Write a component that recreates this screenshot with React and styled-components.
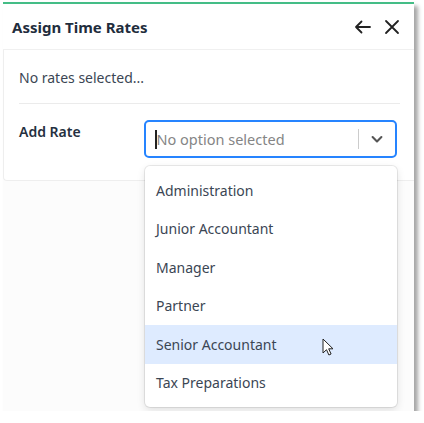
import React from "react";
import styled, { createGlobalStyle } from "styled-components";

const GlobalStyle = createGlobalStyle`
  body {
    margin: 0;
    background: #fff;
    font-family: "Noto Sans", "Open Sans", sans-serif;
  }
`;

const options = [
  "Administration",
  "Junior Accountant",
  "Manager",
  "Partner",
  "Senior Accountant",
  "Tax Preparations",
];

const App = () => {
  return (
    <>
      <GlobalStyle />
      <Frame>
        <Header>
          <Title>Assign Time Rates</Title>
          <HeaderIcons>
            <IconButton aria-label="back">
              <svg width="20" height="20" viewBox="0 0 20 20" fill="none" stroke="#222" strokeWidth="1.8" strokeLinecap="round" strokeLinejoin="round">
                <path d="M17 10H3M8.5 4.5 3 10l5.5 5.5" />
              </svg>
            </IconButton>
            <IconButton aria-label="close">
              <svg width="20" height="20" viewBox="0 0 20 20" fill="none" stroke="#222" strokeWidth="1.8" strokeLinecap="round">
                <path d="M4 4l12 12M16 4 4 16" />
              </svg>
            </IconButton>
          </HeaderIcons>
        </Header>
        <Card>
          <EmptyText>No rates selected...</EmptyText>
          <Divider />
          <FieldRow>
            <Label>Add Rate</Label>
            <SelectWrap>
              <Control>
                <Caret />
                <Placeholder>No option selected</Placeholder>
                <Separator />
                <Chevron>
                  <svg width="16" height="16" viewBox="0 0 20 20" fill="none" stroke="#555" strokeWidth="2.6" strokeLinecap="round" strokeLinejoin="round">
                    <path d="M4.5 7.5 10 13l5.5-5.5" />
                  </svg>
                </Chevron>
              </Control>
              <Menu>
                {options.map((opt) => (
                  <Option key={opt} focused={opt === "Senior Accountant"}>
                    {opt}
                    {opt === "Senior Accountant" && (
                      <Pointer width="12" height="18" viewBox="0 0 12 18">
                        <path d="M1 1v14l3.5-3.3 2.4 5.3 2.2-1-2.4-5.2H11z" fill="#fff" stroke="#222" strokeWidth="1" strokeLinejoin="round" />
                      </Pointer>
                    )}
                  </Option>
                ))}
              </Menu>
            </SelectWrap>
          </FieldRow>
        </Card>
      </Frame>
    </>
  );
};

export default App;

const Frame = styled.div`
  margin: 2px 0 0 3px;
  width: 411px;
  height: 409px;
  background: #fcfcfc;
  border-top: 2px solid #44bd86;
  box-shadow: 4px 4px 4px rgba(0, 0, 0, 0.35);
  box-sizing: border-box;
`;

const Header = styled.div`
  height: 45px;
  display: flex;
  align-items: center;
  justify-content: space-between;
  padding: 0 10px 0 9px;
  background: #fff;
  border-bottom: 1px solid #f0f0f0;
`;

const Title = styled.h1`
  margin: 0;
  font-size: 15px;
  font-weight: 700;
  color: #1f2d3d;
`;

const HeaderIcons = styled.div`
  display: flex;
  gap: 5px;
`;

const IconButton = styled.button`
  background: none;
  border: none;
  padding: 0;
  width: 24px;
  height: 24px;
  display: flex;
  align-items: center;
  justify-content: center;
  cursor: pointer;
`;

const Card = styled.div`
  background: #fff;
  border-left: 1px solid #eee;
  border-bottom: 1px solid #eee;
  border-bottom-left-radius: 4px;
  padding: 17px 14px 22px 15px;
`;

const EmptyText = styled.div`
  font-size: 14px;
  line-height: 22px;
  color: #3b4654;
`;

const Divider = styled.div`
  height: 1px;
  background: #ebebeb;
  margin: 14px 0 16px;
`;

const FieldRow = styled.div`
  display: flex;
  align-items: flex-start;
`;

const Label = styled.div`
  width: 125px;
  padding-top: 1px;
  font-size: 14px;
  font-weight: 600;
  line-height: 22px;
  color: #253040;
`;

const SelectWrap = styled.div`
  position: relative;
  width: 253px;
`;

const Control = styled.div`
  height: 38px;
  box-sizing: border-box;
  border: 2px solid #2684ff;
  border-radius: 5px;
  display: flex;
  align-items: center;
  padding-left: 9px;
  background: #fff;
`;

const Caret = styled.span`
  width: 1.5px;
  height: 19px;
  background: #222;
`;

const Placeholder = styled.span`
  flex: 1;
  font-size: 14.5px;
  color: #858585;
`;

const Separator = styled.span`
  width: 1px;
  height: 20px;
  background: #ccc;
`;

const Chevron = styled.span`
  width: 36px;
  display: flex;
  justify-content: center;
`;

const Menu = styled.div`
  position: absolute;
  top: calc(100% + 8px);
  left: 1px;
  right: 0;
  background: #fff;
  border-radius: 5px;
  padding: 5px 0;
  box-shadow: 0 0 0 1px rgba(0, 0, 0, 0.08), 0 3px 8px rgba(0, 0, 0, 0.12);
`;

const Option = styled.div`
  position: relative;
  height: 38.5px;
  display: flex;
  align-items: center;
  padding: 0 11px;
  font-size: 14px;
  color: #3b4654;
  background: ${(p) => (p.focused ? "#deebff" : "transparent")};
`;

const Pointer = styled.svg`
  position: absolute;
  left: 177px;
  top: 13px;
`;
